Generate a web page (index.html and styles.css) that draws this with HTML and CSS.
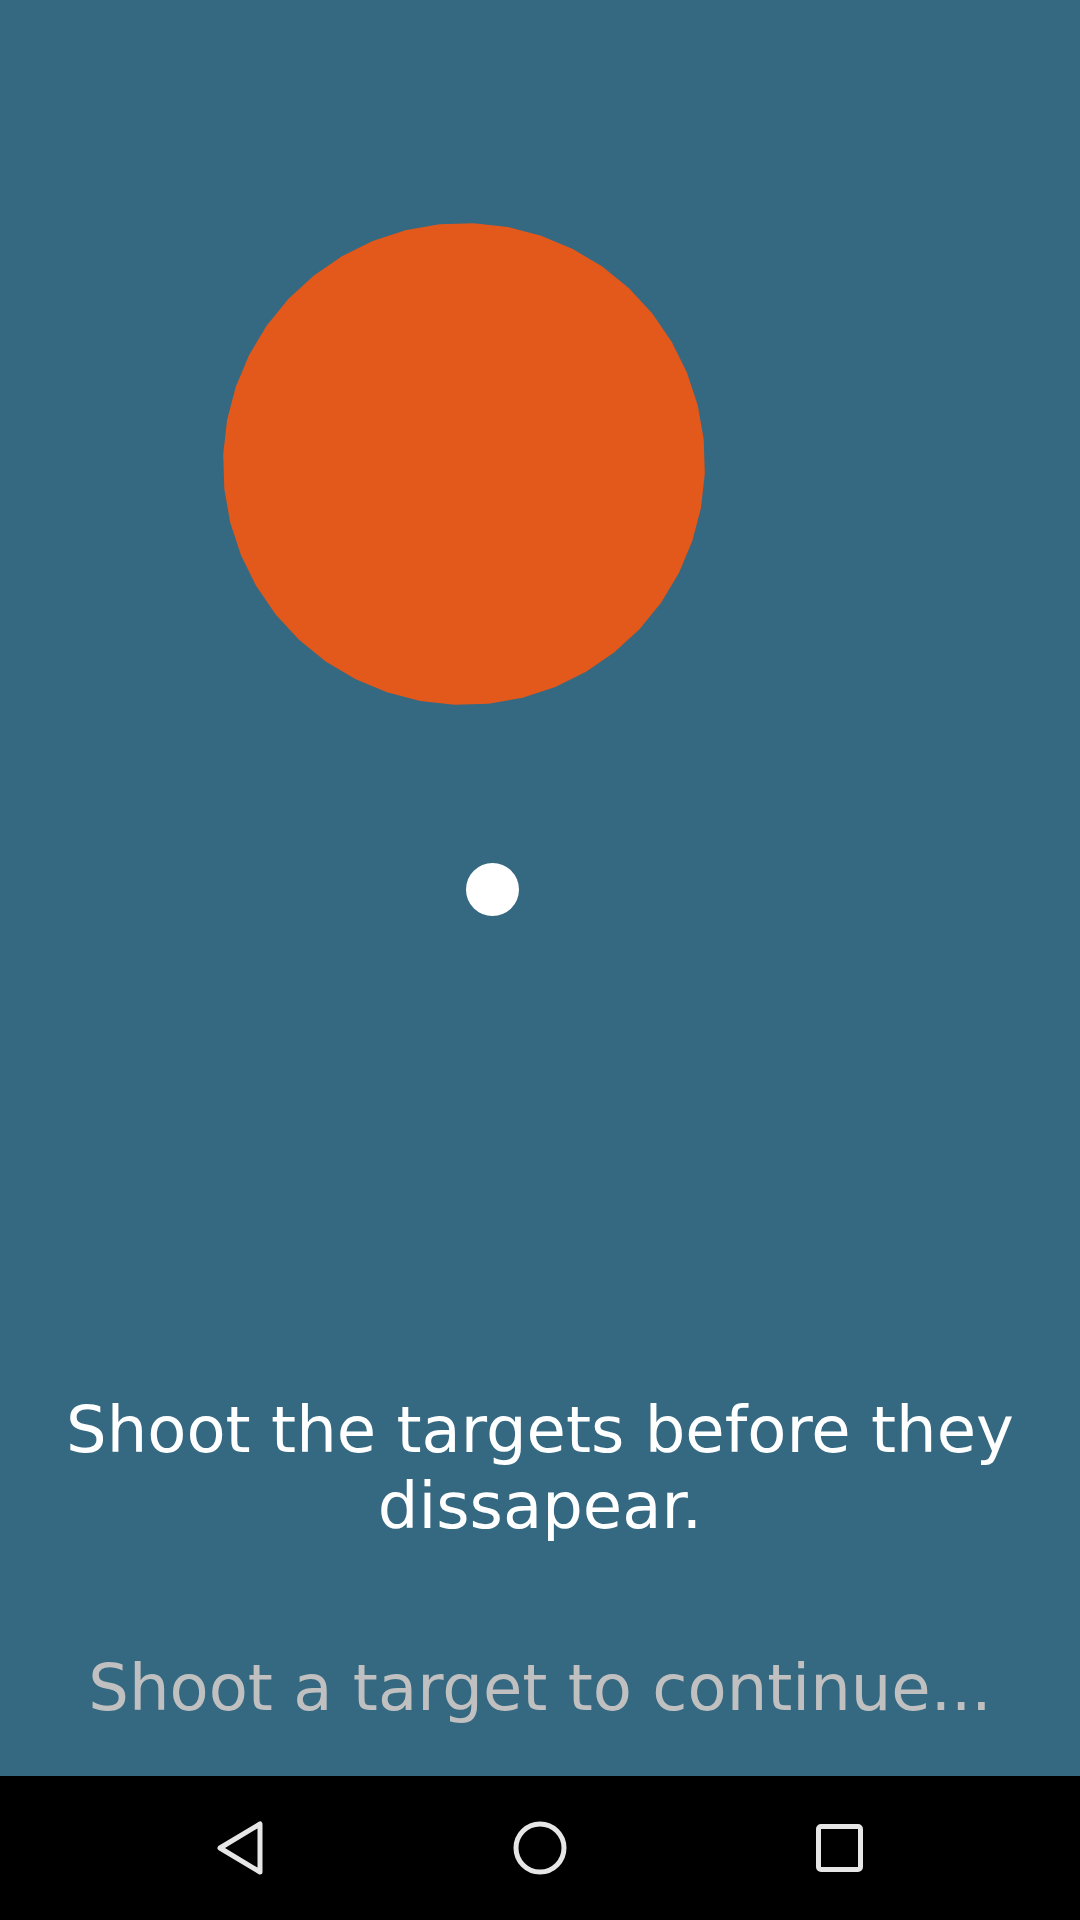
FILE: index.html
```html
<!DOCTYPE html>
<html lang="en">
<head>
<meta charset="utf-8">
<title>Targets</title>
<link rel="stylesheet" href="styles.css">
</head>
<body>
<div class="screen">
  <main class="game">
    <svg class="target" viewBox="0 0 484 484" aria-hidden="true">
      <polygon id="targetPoly" class="target-shape" points=""/>
    </svg>
    <div class="bullet"></div>
    <p class="instructions">Shoot the targets before they dissapear.</p>
    <p class="hint">Shoot a target to continue...</p>
  </main>
  <nav class="navbar">
    <div class="nav-slot">
      <svg class="nav-icon" viewBox="0 0 60 60"><polygon class="nav-stroke" points="10,30 50,6 50,54"/></svg>
    </div>
    <div class="nav-slot">
      <svg class="nav-icon" viewBox="0 0 60 60"><circle class="nav-stroke" cx="30" cy="30" r="24"/></svg>
    </div>
    <div class="nav-slot">
      <svg class="nav-icon" viewBox="0 0 60 60"><rect class="nav-stroke" x="8.5" y="8.5" width="42" height="43" rx="2.5"/></svg>
    </div>
  </nav>
</div>
<script src="script.js"></script>
</body>
</html>
```

FILE: styles.css
```css
html, body {
  margin: 0;
  padding: 0;
}

body {
  width: 1080px;
  height: 1920px;
  overflow: hidden;
  font-family: "DejaVu Sans", "Liberation Sans", sans-serif;
}

.screen {
  display: flex;
  flex-direction: column;
  height: 1920px;
}

.game {
  position: relative;
  flex: 1;
  background: #356881;
  display: flex;
  flex-direction: column;
  justify-content: flex-end;
  align-items: center;
  padding-bottom: 50px;
}

.target {
  position: absolute;
  left: 222px;
  top: 222px;
  width: 484px;
  height: 484px;
}

.target-shape {
  fill: #E2591B;
}

.bullet {
  position: absolute;
  left: 466px;
  top: 863px;
  width: 53px;
  height: 53px;
  border-radius: 50%;
  background: #ffffff;
}

.instructions {
  margin: 0 0 106px;
  padding: 0 40px;
  font-size: 64px;
  line-height: 76px;
  color: #ffffff;
  text-align: center;
}

.hint {
  margin: 0;
  font-size: 64px;
  line-height: 76px;
  color: #c0c0c0;
  text-align: center;
}

.navbar {
  height: 144px;
  background: #000000;
  display: grid;
  grid-template-columns: repeat(3, 300px);
  justify-content: center;
  align-items: center;
}

.nav-slot {
  display: flex;
  justify-content: center;
  align-items: center;
}

.nav-icon {
  width: 60px;
  height: 60px;
}

.nav-stroke {
  fill: none;
  stroke: #e6e6e6;
  stroke-width: 5;
  stroke-linejoin: round;
}
```

FILE: script.js
```js
(function () {
  var n = 44, r = 241, c = 242, pts = [];
  for (var i = 0; i < n; i++) {
    var a = (i / n) * Math.PI * 2 + 0.04;
    pts.push((c + r * Math.cos(a)).toFixed(1) + ',' + (c + r * Math.sin(a)).toFixed(1));
  }
  document.getElementById('targetPoly').setAttribute('points', pts.join(' '));
})();
```
